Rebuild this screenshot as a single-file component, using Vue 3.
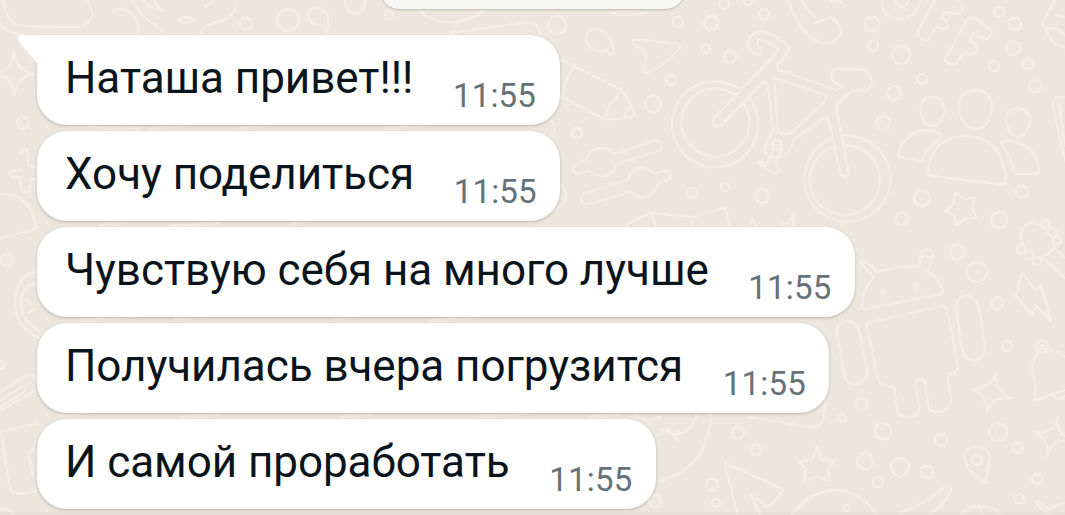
<script setup>
import { ref } from "vue";

const messages = ref([
  { text: "Наташа привет!!!", time: "11:55", first: true },
  { text: "Хочу поделиться", time: "11:55" },
  { text: "Чувствую себя на много лучше", time: "11:55" },
  { text: "Получилась вчера погрузится", time: "11:55" },
  { text: "И самой проработать", time: "11:55" }
]);

// small circles scattered over the wallpaper: [x, y, radius]
const dots = [
  [23, 123, 6], [246, 24, 6], [288, 20, 11], [389, 15, 4], [355, 3, 10], [557, 25, 9],
  [678, 22, 5], [711, 23, 7], [706, 49, 4], [730, 57, 6], [671, 80, 5], [653, 104, 8], [577, 133, 5],
  [724, 4, 5], [748, 1, 4], [764, 14, 5], [692, 193, 5], [725, 187, 4], [762, 196, 7],
  [872, 24, 7], [873, 46, 5], [901, 55, 9], [922, 79, 5], [894, 93, 7], [883, 123, 7], [999, 12, 5],
  [1015, 24, 6], [1013, 48, 7], [994, 66, 5], [1028, 64, 5], [1035, 86, 6], [922, 198, 8], [902, 219, 6],
  [1022, 192, 6], [999, 220, 8], [957, 252, 7], [977, 272, 10], [997, 303, 6], [1007, 346, 5],
  [861, 404, 6], [842, 418, 4], [883, 431, 8], [865, 461, 8], [900, 467, 9], [878, 482, 5], [927, 472, 6],
  [941, 440, 6], [998, 432, 9], [1018, 448, 5], [1037, 479, 5], [1019, 499, 5], [738, 433, 6],
  [756, 450, 5], [712, 485, 6], [716, 503, 4], [655, 501, 6], [7, 260, 6], [0, 365, 4],
  [1045, 224, 4], [1052, 232, 4], [1057, 240, 4], [1021, 249, 4], [1029, 255, 4], [1037, 261, 4]
];
</script>

<template>
  <div class="chat">
    <svg class="wallpaper" viewBox="0 0 1065 515">
      <circle v-for="(d, i) in dots" :key="i" :cx="d[0]" :cy="d[1]" :r="d[2]" />

      <!-- top left -->
      <path d="M3 0Q6 25 24 26L76 27Q92 26 92 12L88 0M0 24Q8 34 24 35" />
      <path d="M112 12Q121 5 131 13Q140 22 138 34M132 0Q142 19 154 24Q164 29 163 34M143 0Q151 10 163 10M154 0L161 12M200 34Q204 24 217 22Q235 18 237 0M178 20Q187 14 194 20Q185 25 178 20M205 7L215 0" />
      <path d="M14 50Q16 71 33 74Q17 77 14 96Q12 77 0 75M0 72Q12 71 14 50" />
      <path d="M21 153Q26 145 28 153L28 164L37 168M9 174Q13 169 21 170M11 178L20 177L21 188Q25 195 30 190L31 179L37 179" />
      <path d="M0 194Q32 193 36 229L0 239" />
      <path d="M37 271Q17 276 15 300Q14 327 40 338M37 283Q22 286 21 302Q20 319 39 331M26 300L31 304M29 313L33 309" />
      <path d="M0 392L27 375Q35 373 37 382M0 411L34 391M0 401L23 386Q28 386 24 392L0 407" />
      <path d="M37 424L1 431L10 489Q12 494 21 494L36 491M34 448Q28 451 29 456L32 474M0 510Q7 505 14 515" />

      <!-- behind the notice -->
      <path d="M308 15Q309 7 317 8Q330 10 328 24Q328 31 325 34Q326 24 318 25Q309 24 308 15M418 10Q447 35 485 10M450 33L530 22Q539 23 540 34" />
      <path d="M612 13Q625 18 647 12" />
      <path d="M599 51Q586 48 586 38Q588 28 598 29Q612 33 614 54L609 55L607 49Q603 52 599 51Z" />
      <path d="M633 40Q638 39 678 44Q682 46 678 50Q664 66 647 73Q643 73 644 67Q648 55 645 51L633 43Z" />

      <!-- pencil -->
      <path d="M562 60L620 89Q629 98 635 116Q630 119 604 119L561 97M574 67Q565 79 562 96M618 92Q617 103 609 104Q609 114 604 117M635 116L625 118Q624 112 629 108" />
      <!-- wrenches -->
      <path d="M615 154L654 141Q662 140 662 147Q661 151 656 152L617 164Q611 178 601 176Q592 174 589 171L577 174Q572 171 573 168Q574 164 585 160Q591 147 602 148Q611 148 615 154Z" />
      <path d="M628 180L587 193Q580 194 581 201Q583 205 588 204L631 192Q638 199 646 197Q655 194 658 184L666 181Q672 178 670 173Q667 170 663 171L655 174Q650 168 640 168Q629 170 628 180Z" />
      <path d="M549 119Q557 124 553 136M561 185Q573 200 555 210M626 225Q640 217 652 213L692 217L723 208Q728 210 729 226M652 213L655 225M692 217L693 226M751 224L753 219L756 225M780 225L788 223L794 212L793 226" />

      <!-- bicycle -->
      <path d="M738 88A43 43 0 1 0 749 98" />
      <path d="M734 94A34 34 0 1 0 744 104" />
      <path d="M714 117Q711 123 717 127L722 125L762 83Q766 80 768 87L773 132Q764 143 765 152Q774 161 784 156Q792 149 794 140L823 118Q827 116 829 121L840 172Q844 180 849 174L836 107L844 97L853 91" />
      <path d="M714 118L777 53Q780 49 774 46L764 40Q757 38 757 44Q764 53 760 55Q751 55 748 47Q747 33 761 32Q772 33 783 41Q791 47 787 53L777 66L779 70L837 90L841 87L832 80Q829 70 838 69L864 70Q873 74 871 86Q869 91 862 90L854 91" />
      <path d="M774 79L778 79L823 94Q828 97 825 102L792 132Q786 137 778 131Z" />
      <path d="M773 151L766 164Q758 159 758 163L765 167Q774 175 779 172L776 161L782 149Q779 142 773 146Z" />
      <circle cx="777" cy="145" r="5" />
      <path d="M831 139A43 43 0 1 0 843 136M833 147A35 35 0 1 0 845 145" />
      <path d="M788 0Q796 23 810 37M801 0Q808 11 815 17M800 28Q818 48 834 41Q844 34 840 29Q837 18 829 17L815 23" />

      <!-- letters and a badge -->
      <path d="M882 0Q881 16 895 18Q916 22 920 0M895 0Q896 8 902 7Q908 6 908 0M831 1L842 2" />
      <path d="M935 0L917 33Q919 40 928 40L936 27Q943 31 948 27Q947 19 942 18L944 12Q955 14 959 14Q966 8 959 0" />
      <path d="M968 18L945 60Q949 66 957 63L964 52Q975 57 977 50Q977 43 970 41L973 34L986 39Q993 35 991 30L978 20Q972 16 968 18Z" />
      <path d="M1055 0L1042 23Q1042 27 1046 29Q1051 46 1065 47M1055 15L1065 17M1046 29Q1056 26 1065 35" />

      <!-- people -->
      <path d="M921 108Q921 97 932 97Q943 98 944 110Q942 126 931 126Q920 124 921 108ZM959 106Q960 90 976 90Q991 91 992 107Q990 129 974 129Q961 128 959 106ZM1006 119Q1006 109 1018 108Q1029 110 1030 120Q1026 137 1017 137Q1008 135 1006 119Z" />
      <path d="M928 175Q929 137 966 136Q1003 137 1006 180Q1006 185 1000 184L931 176Z" />
      <path d="M942 137Q937 130 922 130Q902 136 899 154Q898 158 902 158L922 161Q927 147 942 137ZM1001 145Q1000 141 1007 141Q1035 142 1039 170Q1039 174 1034 174L1015 174Q1012 157 1001 145Z" />
      <path d="M955 192L964 199L975 198L972 208L976 218L966 218L957 225L954 216L945 211L953 205Z" />

      <!-- paddle, brush and bolt at the right edge -->
      <path d="M1065 97L1055 98Q1052 103 1054 111L1065 161M1059 104L1065 146" />
      <path d="M1020 235Q1022 223 1034 222L1041 225M1055 243Q1054 251 1042 258M1020 235L1023 245M1055 248L1065 258M1044 259L1065 278" />
      <path d="M919 260L922 252Q927 246 933 252L932 260" />
      <path d="M1022 273L1036 291L1041 285L1051 321L1036 306L1032 315L1016 296Z" />

      <!-- android -->
      <path d="M862 309Q861 290 874 277L860 262Q866 259 877 272Q894 267 918 266L924 255L932 258L928 272Q937 276 943 291Q942 295 936 295L866 309Z" />
      <circle cx="883" cy="292" r="2" />
      <circle cx="916" cy="286" r="2" />
      <path d="M867 323L942 306Q947 306 948 313L958 366Q958 373 947 375L951 398Q951 411 939 412Q929 412 928 406L925 382Q920 376 915 382L919 407Q918 417 908 417Q898 417 897 409L894 387L884 386Q879 384 877 376L867 326Z" />
      <path d="M837 333Q836 322 847 321Q857 322 859 331L867 371Q867 383 855 384Q845 383 844 374ZM956 307Q955 297 967 296Q976 297 979 306L985 346Q985 358 975 360Q964 360 962 349Z" />
      <path d="M996 373Q994 391 1010 398Q990 397 987 413Q988 397 972 389Q990 390 996 373ZM1058 417Q1056 432 1065 436M1065 441Q1051 441 1047 456Q1049 438 1033 432Q1055 435 1058 417" />
      <path d="M1047 350Q1058 350 1065 357M1038 353Q1031 362 1033 374Q1037 387 1035 401L1052 394L1065 390M1052 394Q1058 402 1065 396" />
      <circle cx="1042" cy="347" r="6" />
      <circle cx="1042" cy="347" r="2" />

      <!-- bottom right -->
      <path d="M986 483L969 470Q958 451 974 446Q988 446 990 457Z" />
      <circle cx="977" cy="460" r="5" />
      <path d="M817 447L822 460L835 461L828 469L829 481L817 477L804 481L806 469L799 462L812 459Z" />
      <path d="M725 463Q727 464 782 489Q784 493 769 506Q765 508 763 503L751 495Q755 506 760 515M738 515L725 466" />
      <path d="M749 417L811 427Q820 428 823 421L826 399M791 515Q812 490 836 490Q862 492 877 515M900 513Q926 504 945 487Q952 484 951 490Q946 504 929 515M961 513Q979 499 1000 513M980 508L983 515M1037 501L1048 509L1065 503M1037 501Q1033 506 1052 515" />
      <circle cx="847" cy="508" r="3" />
      <path d="M636 415Q646 425 660 417M661 430Q671 427 679 441M657 435Q667 429 675 437L678 431M711 412Q710 466 661 481M697 412Q692 434 673 435" />

      <!-- fragments that show between the bubbles -->
      <path d="M70 126L140 128M150 128L190 125M240 128L270 125M385 128L430 125M100 225L127 222M170 226L220 223M290 224L310 221M80 320L145 316M175 319L210 316M335 319L355 316M430 320L480 317M60 415L93 412M180 417L220 414M340 417L370 414M480 416L530 413M590 416L620 414" />
    </svg>

    <div class="notice"></div>

    <div class="messages">
      <div v-for="(m, i) in messages" :key="i" class="bubble">
        <svg v-if="m.first" class="tail" viewBox="0 0 50 34">
          <path d="M50 0H4Q-2 1 1 7L19 28V34H50Z" />
        </svg>
        <span class="text">{{ m.text }}</span>
        <span class="time">{{ m.time }}</span>
      </div>
    </div>
    <div class="edge"></div>
  </div>
</template>

<style>
body {
  margin: 0;
}
</style>

<style scoped>
.chat {
  position: relative;
  width: 1065px;
  height: 515px;
  overflow: hidden;
  background: #ede6dc;
  font-family: Roboto, sans-serif;
}
.wallpaper {
  position: absolute;
  inset: 0;
  width: 1065px;
  height: 515px;
  fill: none;
  stroke: #f4eee8;
  stroke-width: 2.3;
  stroke-linecap: round;
  stroke-linejoin: round;
}
.notice {
  position: absolute;
  top: -40px;
  left: 380px;
  width: 305px;
  height: 49px;
  border-radius: 20px;
  background: #f7f8f6;
  box-shadow: 0 1px 2px rgba(90, 75, 55, 0.3);
}
.messages {
  position: relative;
  display: flex;
  flex-direction: column;
  align-items: flex-start;
  gap: 6px;
  padding: 34.5px 0 0 37px;
}
.bubble {
  position: relative;
  display: flex;
  align-items: flex-start;
  gap: 39.6px;
  box-sizing: border-box;
  height: 90px;
  padding: 0 23.5px 0 28px;
  border-radius: 30px;
  background: #fff;
  box-shadow: 0 1px 3px rgba(90, 75, 55, 0.32);
  white-space: nowrap;
}
.bubble:first-child {
  border-top-left-radius: 0;
}
/* Corner that points out of the first bubble */
.tail {
  position: absolute;
  top: 0;
  left: -19px;
  width: 50px;
  height: 34px;
  fill: #fff;
}
.text {
  padding-top: 17px;
  font-size: 44px;
  line-height: 52px;
  letter-spacing: -0.05px;
  color: #0b141a;
}
.time {
  padding-top: 41px;
  font-size: 33px;
  line-height: 40px;
  letter-spacing: 0.2px;
  color: #667178;
}
.edge {
  position: absolute;
  right: 0;
  bottom: 0;
  left: 0;
  height: 3px;
  background: rgba(120, 120, 110, 0.05);
}
</style>
